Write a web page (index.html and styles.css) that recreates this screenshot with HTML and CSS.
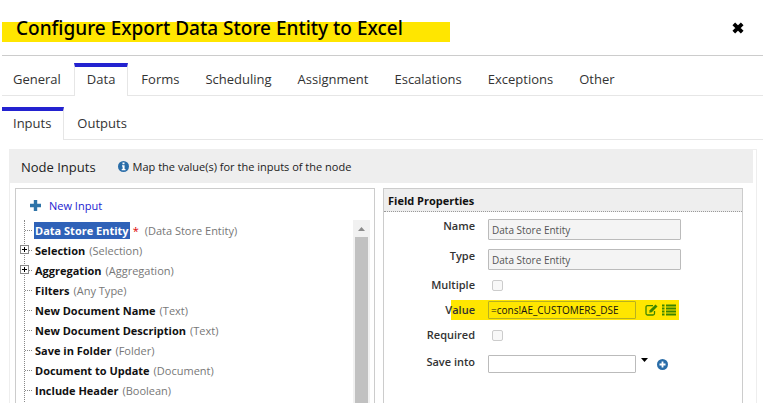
FILE: index.html
```html
<!DOCTYPE html>
<html lang="en">

<head>
    <meta charset="UTF-8">
    <meta name="viewport" content="width=device-width, initial-scale=1.0">
    <title>Configure Export Data Store Entity to Excel</title>
    <link rel="stylesheet" href="styles.css">
</head>

<body>
    <div class="dialog">
        <header class="dialog-header">
            <h1 class="title">Configure Export Data Store Entity to Excel</h1>
            <button class="icon-btn close" type="button" aria-label="Close">
                <svg width="12" height="12" viewBox="0 0 12 12"><path d="M1.8 1.8l8.4 8.400M10.200 1.800l-8.400 8.400" stroke="#000" stroke-width="3.800"/></svg>
            </button>
        </header>

        <!-- main tabs -->
        <nav class="tabs">
            <a class="tab" href="#">General</a>
            <a class="tab active" href="#">Data</a>
            <a class="tab" href="#">Forms</a>
            <a class="tab" href="#">Scheduling</a>
            <a class="tab" href="#">Assignment</a>
            <a class="tab" href="#">Escalations</a>
            <a class="tab" href="#">Exceptions</a>
            <a class="tab" href="#">Other</a>
        </nav>

        <!-- sub tabs -->
        <nav class="tabs subtabs">
            <a class="tab active" href="#">Inputs</a>
            <a class="tab" href="#">Outputs</a>
        </nav>

        <main class="node">
            <div class="node-header">
                <h2 class="node-title">Node Inputs</h2>
                <svg width="11" height="11" viewBox="0 0 11 11"><circle cx="5.5" cy="5.5" r="5.5" fill="#2a6da8"/><path d="M4.5 1.5h2v1.7h-2zM4 4.2h2.6v3.9h.9v1.2H3.7V8.1h.9V5.4H4z" fill="#fff"/></svg>
                <span class="hint">Map the value(s) for the inputs of the node</span>
            </div>

            <div class="columns">
                <section class="box tree-box">
                    <a class="new-input" href="#">
                        <svg width="11" height="11" viewBox="0 0 11 11"><path d="M5.5 0v11M0 5.5h11" stroke="#2f74a8" stroke-width="3.4"/></svg>
                        New Input
                    </a>
                    <div class="tree-area">
                        <ul class="tree">
                            <li><b class="selected">Data Store Entity</b> <span class="star">*</span> <span class="type">(Data Store Entity)</span></li>
                            <li><button class="expand" type="button" aria-label="Expand Selection"></button><b>Selection</b> <span class="type">(Selection)</span></li>
                            <li><button class="expand" type="button" aria-label="Expand Aggregation"></button><b>Aggregation</b> <span class="type">(Aggregation)</span></li>
                            <li><b>Filters</b> <span class="type">(Any Type)</span></li>
                            <li><b>New Document Name</b> <span class="type">(Text)</span></li>
                            <li><b>New Document Description</b> <span class="type">(Text)</span></li>
                            <li><b>Save in Folder</b> <span class="type">(Folder)</span></li>
                            <li><b>Document to Update</b> <span class="type">(Document)</span></li>
                            <li><b>Include Header</b> <span class="type">(Boolean)</span></li>
                        </ul>
                        <div class="scrollbar">
                            <svg width="17" height="17" viewBox="0 0 17 17"><path d="M5 11l3.5-4 3.5 4z" fill="#8b8b8b"/></svg>
                            <div class="thumb"></div>
                        </div>
                    </div>
                </section>

                <section class="box props">
                    <h3 class="props-title">Field Properties</h3>
                    <form class="form">
                        <div class="row">
                            <label for="name">Name</label>
                            <input class="text wide" id="name" type="text" value="Data Store Entity" disabled>
                        </div>
                        <div class="row">
                            <label for="type">Type</label>
                            <input class="text wide" id="type" type="text" value="Data Store Entity" disabled>
                        </div>
                        <div class="row check-row">
                            <label for="multiple">Multiple</label>
                            <input class="check" id="multiple" type="checkbox" disabled>
                        </div>
                        <div class="row marked">
                            <label for="value">Value</label>
                            <input class="text" id="value" type="text" value="=cons!AE_CUSTOMERS_DSE">
                            <span class="actions">
                                <button class="icon-btn" type="button" aria-label="Edit value">
                                    <svg width="13" height="12" viewBox="0 0 13 12"><path d="M8 1.6H2.5Q1 1.6 1 3v6.5Q1 11 2.5 11H8Q9.5 11 9.5 9.5V7" fill="none" stroke="#3d8500" stroke-width="1.3"/><path d="M4.2 8.8l.5-2.5L10.5.6l2 2L6.8 8.3z" fill="#3d8500"/></svg>
                                </button>
                                <button class="icon-btn" type="button" aria-label="Choose from list">
                                    <svg width="14" height="12" viewBox="0 0 14 12"><path d="M0 1.5h2.5M0 4.5h2.5M0 7.5h2.5M0 10.5h2.5M4 1.5h10M4 4.5h10M4 7.5h10M4 10.5h10" stroke="#3d8500" stroke-width="1.8"/></svg>
                                </button>
                            </span>
                        </div>
                        <div class="row check-row">
                            <label for="required">Required</label>
                            <input class="check" id="required" type="checkbox" disabled>
                        </div>
                        <div class="row save">
                            <label for="save">Save into</label>
                            <input class="text" id="save" type="text">
                            <span class="actions">
                                <button class="icon-btn arrow" type="button" aria-label="Show variables">
                                    <svg width="7" height="4" viewBox="0 0 7 4"><path d="M0 0h7L3.5 4z"/></svg>
                                </button>
                                <button class="icon-btn add" type="button" aria-label="Add variable">
                                    <svg width="11" height="11" viewBox="0 0 11 11"><circle cx="5.5" cy="5.5" r="5.5" fill="#2a6da8"/><path d="M5.5 2.5v6M2.5 5.5h6" stroke="#fff" stroke-width="1.8"/></svg>
                                </button>
                            </span>
                        </div>
                    </form>
                </section>
            </div>
        </main>
    </div>
</body>

</html>
```

FILE: styles.css
```css
* {
    box-sizing: border-box;
    margin: 0;
    padding: 0;
}

body {
    font-family: "Open Sans", "Noto Sans", sans-serif;
    font-size: 11px;
    color: #222;
    background-color: #fff;
}

a {
    text-decoration: none;
}

svg {
    display: block;
    flex: none;
}

.dialog {
    display: flex;
    flex-direction: column;
    height: 100vh;
    padding-left: 2px;
    overflow: hidden;
}

.icon-btn {
    border: 0;
    background: none;
}

/* header */
.dialog-header {
    display: flex;
    flex: none;
    align-items: center;
    justify-content: space-between;
    height: 56px;
    padding-right: 19px;
    border-bottom: 1px solid #ccc;
}

.title {
    width: 448px;
    padding-left: 14px;
    font-family: "Noto Sans", sans-serif;
    font-size: 19px;
    font-weight: 500;
    line-height: 28px;
    white-space: nowrap;
    color: #000;
    background: linear-gradient(#ffe600, #ffe600) 0 100% / 100% 20px no-repeat;
}

/* tabs */
.tabs {
    display: flex;
    flex: none;
    height: 40px;
    padding-top: 7px;
    border-bottom: 1px solid #e6e6e6;
}

.tab {
    height: 33px;
    padding: 2px 12px 0;
    border-top: 4px solid transparent;
    border-left: 1px solid transparent;
    border-right: 1px solid transparent;
    font-size: 13px;
    line-height: 20px;
    color: #333;
}

.tab.active {
    border-color: #2322d0 #e6e6e6 #fff;
    background-color: #fff;
}

.subtabs {
    height: 44px;
    padding-top: 11px;
}

.tabs .tab:first-child {
    padding-left: 11px;
    border-left: 0;
}

/* node panel */
.node {
    display: flex;
    flex: 1;
    flex-direction: column;
    min-height: 0;
    margin: 9px 6px 0 7px;
    padding-right: 3px;
    border: 1px solid #eee;
    border-bottom: 0;
}

.node-header {
    display: flex;
    flex: none;
    align-items: center;
    height: 33px;
    padding-left: 11px;
    background-color: #eee;
}

.node-title {
    margin-right: 22px;
    font-size: 13px;
    font-weight: 500;
}

.hint {
    margin-left: 4px;
}

.columns {
    display: grid;
    flex: 1;
    grid-template-columns: 1fr 1fr;
    gap: 8px;
    min-height: 0;
    padding: 5px 10px 0 5px;
}

.box {
    min-height: 0;
    border: 1px solid #ccc;
    border-bottom: 0;
    overflow: hidden;
}

/* tree */
.tree-box {
    display: flex;
    flex-direction: column;
    padding: 5px 4px 0 8px;
}

.new-input {
    display: flex;
    align-items: center;
    gap: 8px;
    height: 22px;
    margin-bottom: 4px;
    padding-left: 6px;
    color: #2322d0;
}

.tree-area {
    display: flex;
    flex: 1;
    justify-content: space-between;
    min-height: 0;
}

.tree {
    height: 200px;
    list-style: none;
    border-left: 1px dotted #888;
}

/* the plus box sits over the dotted trunk */
.tree li {
    position: relative;
    display: flex;
    align-items: center;
    height: 20px;
    white-space: nowrap;
}

.tree li::before {
    content: "";
    width: 7px;
    margin-right: 3px;
    border-top: 1px dotted #888;
}

.tree b {
    margin-right: 4px;
    font-weight: 700;
    color: #111;
}

.tree .selected {
    padding: 0 1px;
    margin-right: 3px;
    margin-left: -1px;
    line-height: 17px;
    color: #fff;
    background-color: #2f62b8;
}

.star {
    margin-right: 6px;
    color: #d00;
}

.type {
    color: #777;
}

.expand {
    position: absolute;
    top: 5px;
    left: -5px;
    width: 9px;
    height: 9px;
    border: 1px solid #888;
    background:
        linear-gradient(#000, #000) center / 5px 1px no-repeat,
        linear-gradient(#000, #000) center / 1px 5px no-repeat,
        #fff;
}

.scrollbar {
    display: flex;
    flex-direction: column;
    width: 17px;
    background-color: #f1f1f1;
}

.thumb {
    flex: 1;
    margin: 0 2px;
    background-color: #c1c1c1;
}

/* field properties */
.props-title {
    height: 23px;
    padding-left: 4px;
    border-bottom: 1px dotted #999;
    font-size: 11px;
    font-weight: 700;
    line-height: 24px;
    color: #111;
    background-color: #eee;
}

.form {
    display: flex;
    flex-direction: column;
    gap: 9px;
    padding-top: 7px;
}

.row {
    display: flex;
    align-items: flex-start;
}

.row label {
    width: 91px;
    margin-right: 13px;
    font-weight: 600;
    line-height: 14px;
    text-align: right;
    color: #333;
}

.text {
    width: 148px;
    height: 18px;
    padding: 0 2px;
    border: 1px solid #bbb;
    border-radius: 1px;
    font-family: inherit;
    font-size: 10px;
    color: #111;
    background-color: transparent;
}

.text.wide {
    width: 193px;
    height: 21px;
    padding: 0 3px;
    color: #555;
    background-color: #f4f4f4;
}

.check {
    appearance: none;
    width: 11px;
    height: 11px;
    margin-left: 4px;
    border: 1px solid #ccc;
    border-radius: 2px;
    background-color: #f8f8f8;
}

.check-row {
    align-items: center;
    height: 12px;
}

.row.marked {
    align-items: center;
    height: 20px;
    background: linear-gradient(#ffe600, #ffe600) 67px 0 / 228px 100% no-repeat;
}

.marked .text {
    border-color: #b8b020;
}

.actions {
    display: flex;
    gap: 4px;
    margin-left: 9px;
}

.row.save {
    margin-top: 5px;
}

.arrow {
    align-self: flex-start;
    padding-top: 3px;
    margin-left: -4px;
}

.add {
    padding: 4px 0 0 5px;
}
```
